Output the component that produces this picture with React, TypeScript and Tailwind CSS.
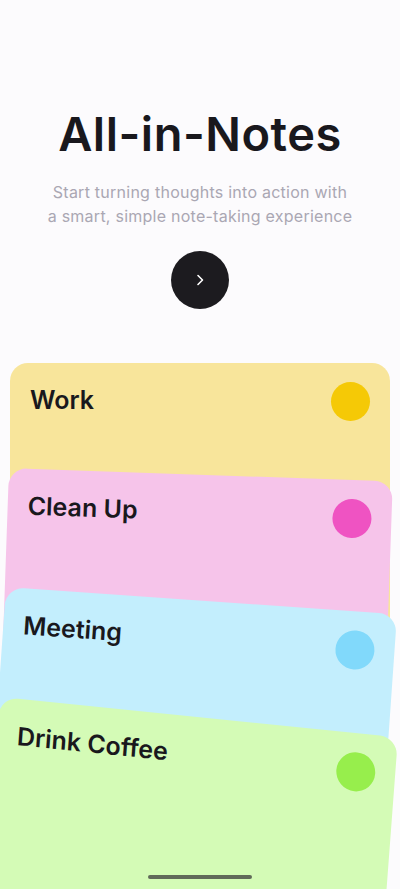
import React from "react";

const font = { fontFamily: "Inter, 'Noto Sans', sans-serif" };

const Chevron = () => (
  <svg width="10" height="14" viewBox="0 0 10 14" fill="none">
    <path d="M3 2.5 7.5 7 3 11.5" stroke="white" strokeWidth="1.6" strokeLinecap="round" strokeLinejoin="round" />
  </svg>
);

const NoteCard = ({
  title,
  className,
  dot,
}: {
  title: string;
  className: string;
  dot: string;
}) => (
  <div className={`h-[300px] rounded-[18px] px-5 pt-[19px] flex items-start justify-between origin-top-left ${className}`}>
    <p className="text-[25px] leading-[31px] font-semibold text-[#19181d] pt-[3px]">{title}</p>
    <span className={`w-[39px] h-[39px] rounded-full shrink-0 ${dot}`} />
  </div>
);

export default function App() {
  return (
    <div style={font} className="relative h-[889px] w-full overflow-hidden bg-[#fcfbfd] flex flex-col">
      {/* Hero */}
      <div className="flex flex-col items-center pt-[110px]">
        <h1 className="text-[47px] leading-[47px] font-semibold tracking-[0.5px] text-[#19181d]">All-in-Notes</h1>
        <p className="mt-[23px] text-center text-[16px] leading-[24px] tracking-[0.25px] text-[#aaa7b3]">
          Start turning thoughts into action with
          <br />
          a smart, simple note-taking experience
        </p>
        <button className="mt-[23px] w-[58px] h-[58px] rounded-full bg-[#1c1b1f] flex items-center justify-center">
          <Chevron />
        </button>
      </div>

      {/* Stacked notes */}
      <div className="flex flex-col items-start mt-[54px]">
        <NoteCard title="Work" className="ml-[10px] w-[380px] bg-[#f8e59b]" dot="bg-[#f5c906]" />
        <NoteCard title="Clean Up" className="ml-[9px] -mt-[195px] w-[384px] rotate-[2deg] bg-[#f6c4ea]" dot="bg-[#ef53c2]" />
        <NoteCard title="Meeting" className="ml-[6px] -mt-[181px] w-[392px] rotate-[4deg] bg-[#c3eefd]" dot="bg-[#81d9fb]" />
        <NoteCard title="Drink Coffee" className="ml-0 -mt-[190px] w-[400px] rotate-[5.8deg] skew-x-[1.5deg] bg-[#d4fbb6]" dot="bg-[#97ee4c]" />
      </div>

      {/* Home indicator */}
      <div className="absolute bottom-[10px] left-1/2 -translate-x-1/2 w-[104px] h-[4px] rounded-full bg-[#3a3a3a]/75" />
    </div>
  );
}
